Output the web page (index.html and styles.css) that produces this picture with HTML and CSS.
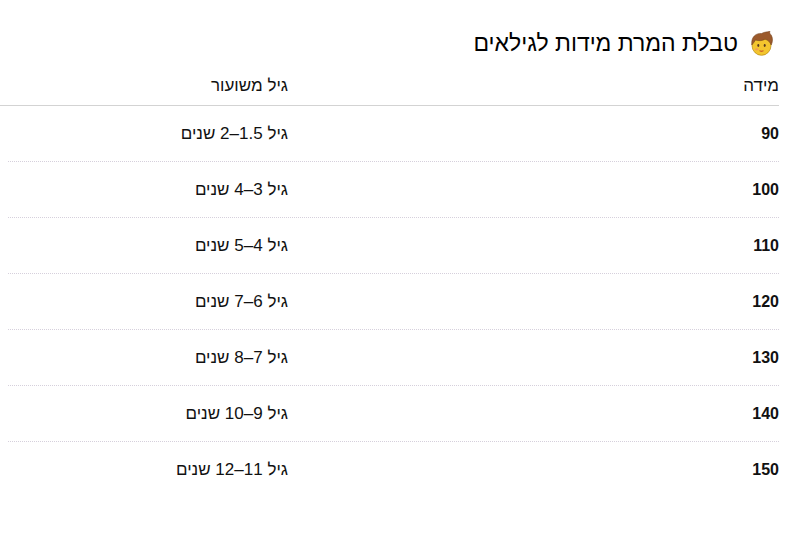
FILE: index.html
```html
<!DOCTYPE html>
<html lang="he" dir="rtl">
<head>
<meta charset="utf-8">
<link rel="stylesheet" href="styles.css">
</head>
<body>
<div class="page">
  <h2 class="title"><span class="emoji"><svg width="23" height="25" viewBox="0 0 23 25"><ellipse cx="11.5" cy="14.5" rx="9.5" ry="9.8" fill="#f3c52e" stroke="#b88a14" stroke-width="0.7"/><path d="M1.8 14 C0.8 6 6 1.8 11.5 2.5 C14 0.8 17 1.2 20 0.2 C19.2 1.8 20 2.8 21.2 4 C23 7 22.8 11 21.2 14 C20 11 18 9 15 8.2 C12.5 10 8 10 5.5 9 C4.5 11 3.3 12 1.8 14 Z" fill="#9b5a2c" stroke="#6e3c18" stroke-width="0.5"/><ellipse cx="8.3" cy="14.5" rx="1" ry="1.4" fill="#5a3a20"/><ellipse cx="14.7" cy="14.5" rx="1" ry="1.4" fill="#5a3a20"/><ellipse cx="6.8" cy="18.3" rx="1.8" ry="1.1" fill="#f0906a" opacity="0.75"/><path d="M9.6 19.6 Q11.5 21 13.4 19.6" stroke="#c0392b" stroke-width="1.1" fill="none"/></svg></span>טבלת המרת מידות לגילאים</h2>
  <div class="table">
    <div class="row head">
      <div class="c1">מידה</div>
      <div class="c2">גיל משועור</div>
    </div>
    <div class="row"><div class="c1 num">90</div><div class="c2">גיל 1.5–2 שנים</div></div>
    <div class="row"><div class="c1 num">100</div><div class="c2">גיל 3–4 שנים</div></div>
    <div class="row"><div class="c1 num">110</div><div class="c2">גיל 4–5 שנים</div></div>
    <div class="row"><div class="c1 num">120</div><div class="c2">גיל 6–7 שנים</div></div>
    <div class="row"><div class="c1 num">130</div><div class="c2">גיל 7–8 שנים</div></div>
    <div class="row"><div class="c1 num">140</div><div class="c2">גיל 9–10 שנים</div></div>
    <div class="row last"><div class="c1 num">150</div><div class="c2">גיל 11–12 שנים</div></div>
  </div>
</div>
</body>
</html>
```
FILE: styles.css
```css
html, body {
  margin: 0;
  padding: 0;
  background: #fff;
}
body {
  font-family: "Liberation Sans", Arial, sans-serif;
  color: #111;
}
.page {
  padding: 28px 27px 0 8px;
}
.title {
  margin: 0 6px 0 0;
  font-size: 23px;
  font-weight: normal;
  line-height: 30px;
  display: flex;
  align-items: center;
  gap: 12px;
  color: #000;
}
.emoji {
  display: flex;
  width: 23px;
  height: 25px;
}
.table {
  margin-top: 9px;
}
.row {
  box-sizing: border-box;
  display: grid;
  grid-template-columns: 479px 1fr;
  height: 56px;
  align-items: center;
  border-bottom: 1px dotted #d6d0dc;
  font-size: 17px;
  line-height: 20px;
}
.row.head {
  height: 39px;
  margin-left: -8px;
  border-bottom: 1px solid #d3d3d3;
  color: #111;
}
.row.last {
  border-bottom: none;
}
.c2 {
  padding-right: 12px;
}
.num {
  font-weight: bold;
  font-size: 16px;
}
```
